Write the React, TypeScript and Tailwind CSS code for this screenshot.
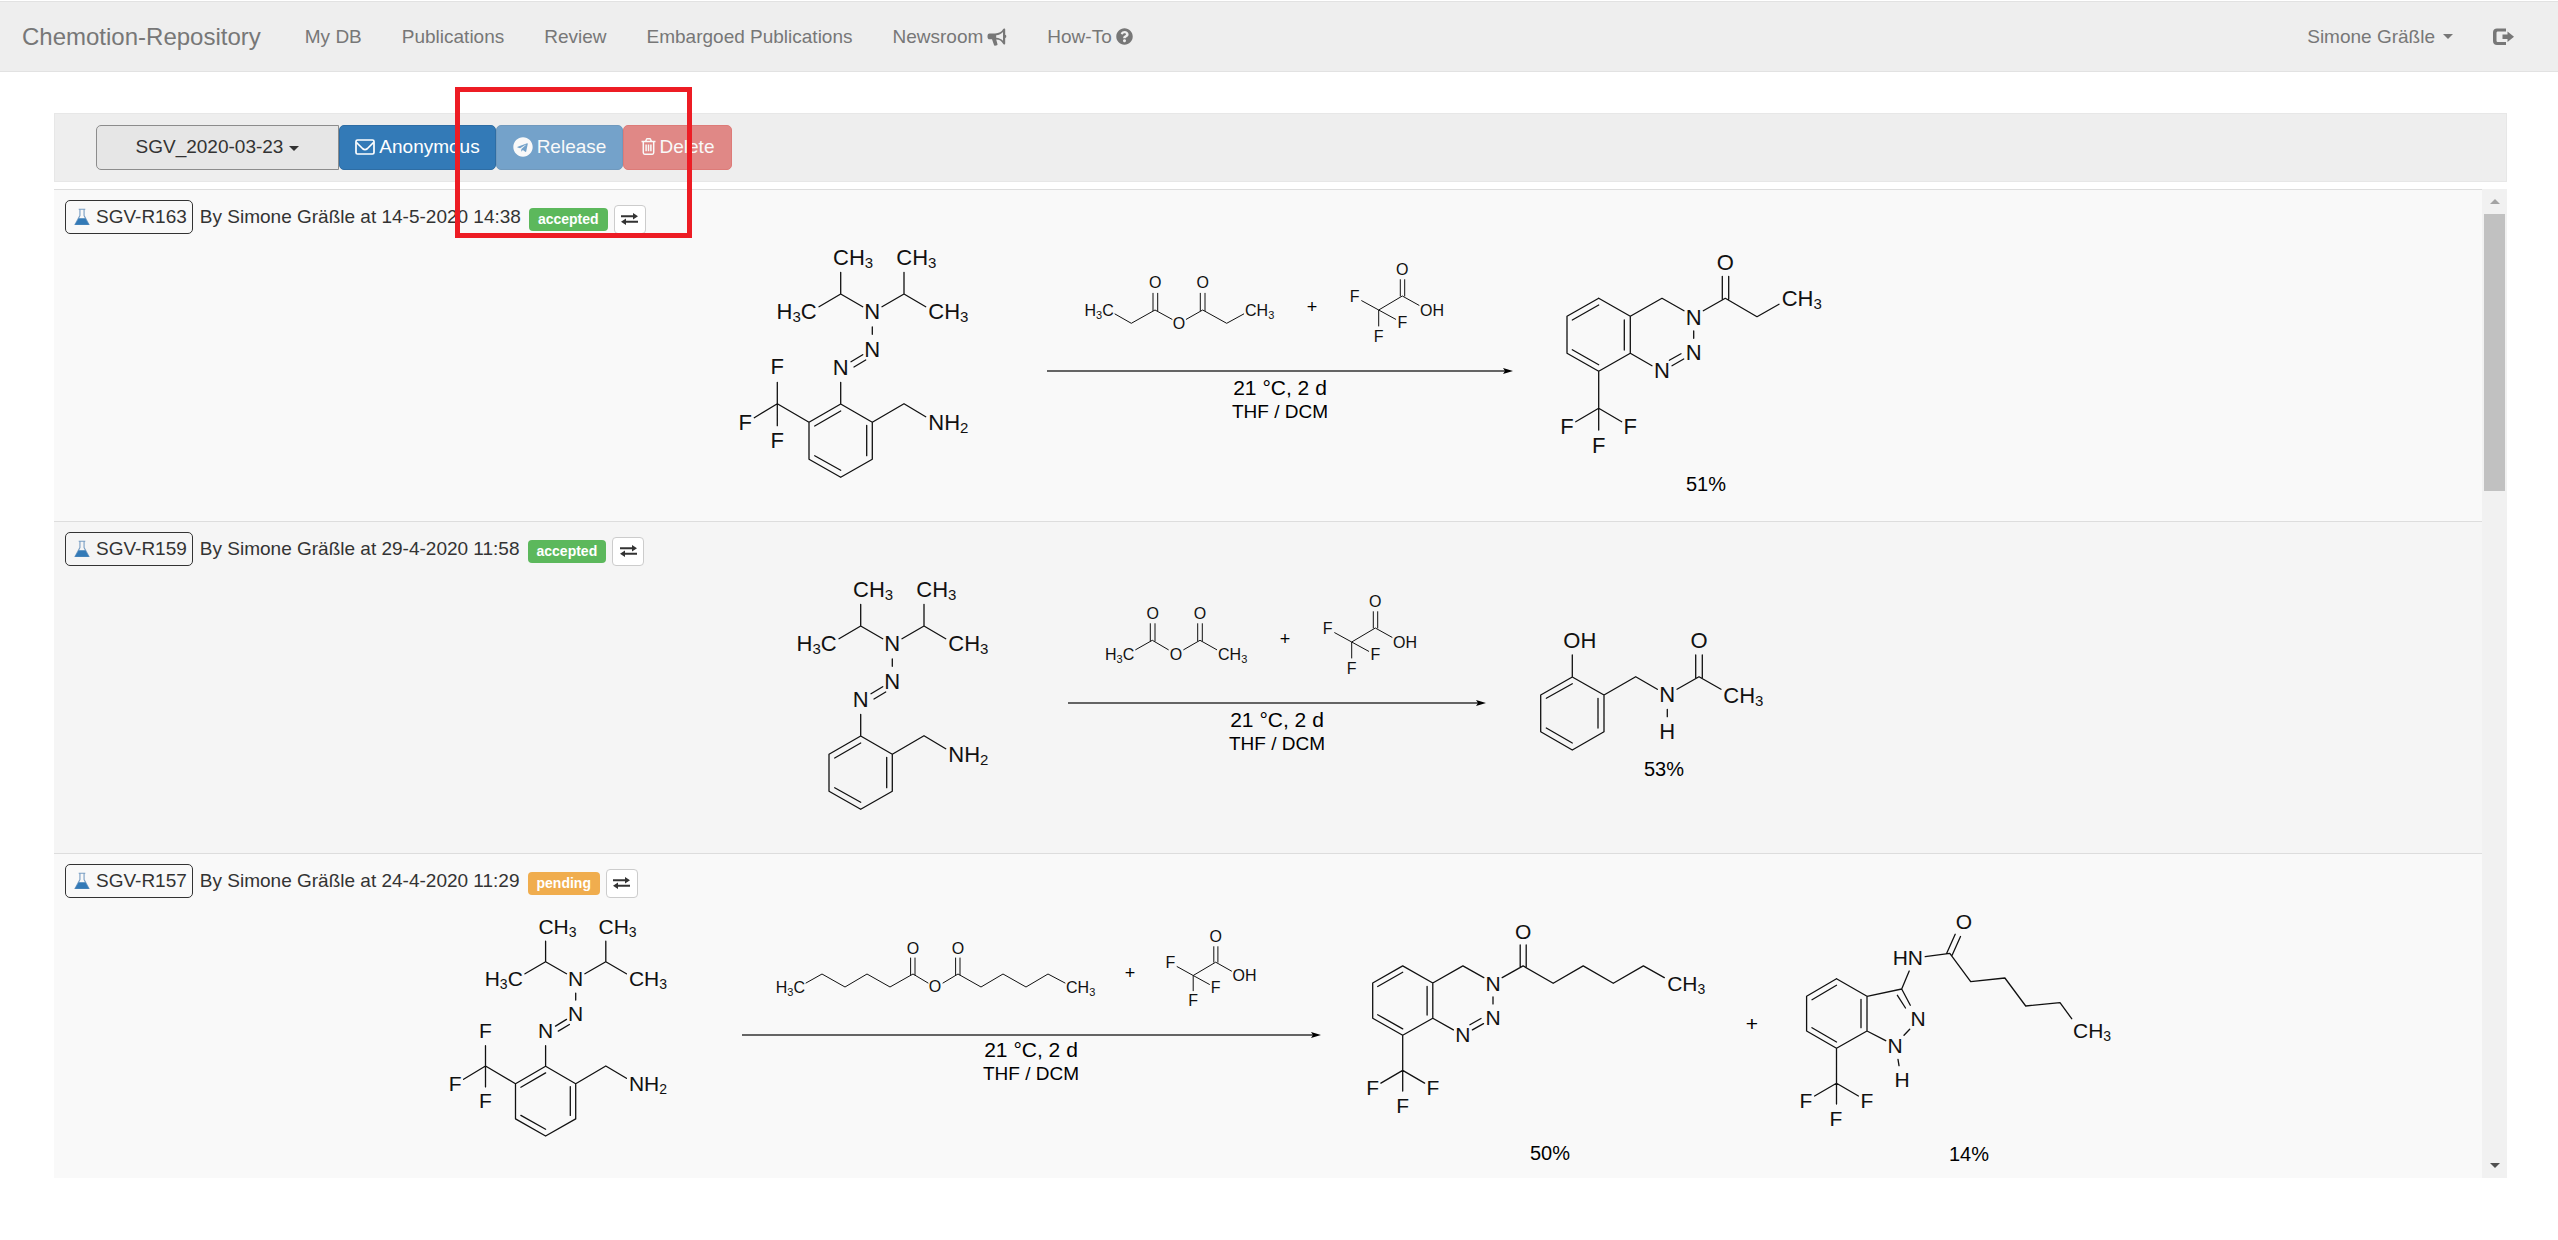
import React from "react";
import { FaQuestionCircle, FaTelegram } from "react-icons/fa";

type Pt = [number, number];
type Anchor = "start" | "middle" | "end";
type Label = [string, number, number, Anchor];

/* ---------- icons ---------- */

function Caret({ className = "" }: { className?: string }) {
  return (
    <svg viewBox="0 0 10 5" className={`inline-block h-[5px] w-[10px] ${className}`} fill="currentColor" aria-hidden="true">
      <path d="M0 0h10L5 5z" />
    </svg>
  );
}

function BullhornIcon() {
  return (
    <svg viewBox="0 0 20 18" className="h-[18px] w-5" fill="currentColor" aria-hidden="true">
      <path d="M17.2 0.4c.9 0 1 .6 1 1.2v5.2c1.500 .2 1.500 3 0 3.200v5.200c0 .8-.2 1.300-1 1.300-.6 0-.9-.3-1.100-.8C14.700 12.700 12.300 11.600 9.200 11.400l1.300 4.900c.1.5 0 .8-.5.9l-2 .5c-.5.1-.8-.1-1-.6L5 11.300H2.500C1.200 11.300.500 10.200.500 8.400s.7-2.900 2-2.900h5.600c3.800-.1 6.600-1.300 8.100-4.400.2-.4.5-.7 1-.7zM16 3.900c-1.700 2-4 3-6.800 3.300v2.500c2.800.2 5.100 1.200 6.800 3.100z" />
    </svg>
  );
}

function LogOutIcon() {
  return (
    <svg viewBox="0 0 21 18" className="h-[18px] w-[21px]" fill="currentColor" aria-hidden="true">
      <path d="M13 0.500V3.500H5C4 3.500 3.500 4 3.500 5v7.500c0 1 .5 1.500 1.500 1.500h8v3H4C1.500 17 0 15.500 0 13V4.500C0 2 1.500.500 4 .500z" />
      <path d="M14.500 3.500L21 8.700l-6.500 5.300v-3.100H9.500V6.500h5z" />
    </svg>
  );
}

function EnvelopeIcon() {
  return (
    <svg viewBox="0 0 20 16" className="h-4 w-5" fill="none" stroke="currentColor" strokeWidth="1.700" aria-hidden="true">
      <rect x="1" y="1" width="18" height="14" rx="1.500" />
      <path d="M1.500 3.500c2 2 4 4 6 6 1.700 1.500 3.300 1.500 5 0 2-2 4-4 6-6" />
    </svg>
  );
}

function TrashIcon() {
  return (
    <svg viewBox="0 0 15 17" className="h-[17px] w-[15px]" fill="none" stroke="currentColor" strokeWidth="1.500" aria-hidden="true">
      <path d="M.5 3.600h14M4.600 3.400l.9-2.200c.1-.3.3-.4.600-.4h2.800c.3 0 .5.1.6.4l.9 2.200M2.300 3.800v10.700c0 1 .6 1.700 1.400 1.700h7.600c.8 0 1.400-.7 1.400-1.700V3.800M5.100 6.400v6.800M7.500 6.400v6.800M9.900 6.400v6.800" />
    </svg>
  );
}

function FlaskIcon() {
  return (
    <svg viewBox="0 0 17 18" className="h-[18px] w-4" aria-hidden="true">
      <path d="M5 .8h7M6.300 1v6.500L1.200 17h14.600L10.700 7.500V1" fill="none" stroke="#7a9fc4" strokeWidth="1.200" />
      <path d="M5 10.300h7l4 7H1z" fill="#337ab7" />
    </svg>
  );
}

function ExchangeIcon() {
  return (
    <svg viewBox="0 0 17 12" className="h-3 w-[17px]" fill="currentColor" aria-hidden="true">
      <path d="M0 2.300h12V0l5 3.300-5 3.200V4.300H0zM17 7.700H5V5.500L0 8.700 5 12V9.700h12z" />
    </svg>
  );
}

/* ---------- structure drawing ---------- */

function AtomText({ label, x, y, anchor, size }: { label: string; x: number; y: number; anchor: Anchor; size: number }) {
  const sub = Math.round(size * 0.68);
  let lowered = false;
  return (
    <text x={x} y={y} textAnchor={anchor} fontSize={size} fill="#111">
      {label.split("").map((ch, i) => {
        const isSub = ch >= "2" && ch <= "3";
        const dy = isSub && !lowered ? 3 : !isSub && lowered ? -3 : 0;
        lowered = isSub;
        return (
          <tspan key={i} dy={dy} fontSize={isSub ? sub : size}>
            {ch}
          </tspan>
        );
      })}
    </text>
  );
}

/* Draws bonds and atom labels given in drawing units, placed at (x, y) and scaled by k. */
function Structure({ x, y, k, size, thin, bonds, labels }: { x: number; y: number; k: number; size: number; thin?: boolean; bonds: Pt[][]; labels: Label[] }) {
  const px = (v: number) => (x + v * k).toFixed(1);
  const py = (v: number) => (y + v * k).toFixed(1);
  const d = bonds.map((line) => "M" + line.map(([a, b]) => `${px(a)} ${py(b)}`).join("L")).join("");
  return (
    <g>
      <path d={d} fill="none" stroke="#111" strokeWidth={thin ? 1 : 1.3} strokeLinecap="round" strokeLinejoin="round" />
      {labels.map(([label, a, b, anchor], i) => (
        <AtomText key={i} label={label} x={Number(px(a))} y={Number(py(b))} anchor={anchor} size={size} />
      ))}
    </g>
  );
}

const THIRD = 1 / 3;
const SMALL = 0.95 / 3;

const triazeneBonds: Pt[][] = [
  [[362, 127], [362, 192], [297, 230]],
  [[362, 192], [428, 230]],
  [[552, 127], [552, 192], [617, 230]],
  [[552, 192], [486, 230]],
  [[457, 291], [457, 313]],
  [[393, 395], [428, 374]],
  [[402, 411], [437, 390]],
  [[362, 457], [362, 522], [457, 577], [457, 688], [362, 742], [267, 688], [267, 577], [362, 522]],
  [[284, 588], [362, 543]],
  [[284, 677], [362, 721]],
  [[440, 586], [440, 677]],
  [[457, 577], [552, 521], [617, 560]],
];
const triazeneLabels: Label[] = [
  ["CH3", 339, 104, "start"],
  ["CH3", 529, 104, "start"],
  ["H3C", 290, 268, "end"],
  ["CH3", 625, 268, "start"],
  ["N", 457, 268, "middle"],
  ["N", 457, 380, "middle"],
  ["N", 362, 434, "middle"],
  ["NH2", 625, 599, "start"],
];
const triazeneCf3Bonds: Pt[][] = [
  [[267, 577], [172, 521], [103, 563]],
  [[172, 457], [172, 587]],
];
const triazeneCf3Labels: Label[] = [
  ["F", 172, 432, "middle"],
  ["F", 76, 599, "middle"],
  ["F", 172, 655, "middle"],
];

function Triazene({ x, y, k, size, cf3 }: { x: number; y: number; k: number; size: number; cf3?: boolean }) {
  return (
    <Structure
      x={x}
      y={y}
      k={k}
      size={size}
      bonds={cf3 ? [...triazeneBonds, ...triazeneCf3Bonds] : triazeneBonds}
      labels={cf3 ? [...triazeneLabels, ...triazeneCf3Labels] : triazeneLabels}
    />
  );
}

const tfaBonds: Pt[][] = [
  [[995, 182], [1046, 210], [1117, 168], [1167, 196]],
  [[1046, 258], [1046, 210], [1097, 238]],
  [[1111, 119], [1111, 168]],
  [[1124, 119], [1124, 168]],
];
const tfaLabels: Label[] = [
  ["F", 974, 185, "middle"],
  ["F", 1117, 265, "middle"],
  ["F", 1046, 307, "middle"],
  ["O", 1117, 104, "middle"],
  ["OH", 1170, 227, "start"],
];

function Benzotriazine({ x, y, k, size, tail, tailEnd }: { x: number; y: number; k: number; size: number; tail: Pt[]; tailEnd: Pt }) {
  return (
    <Structure
      x={x}
      y={y}
      k={k}
      size={size}
      bonds={[
        [[296, 205], [391, 259], [391, 370], [296, 424], [201, 370], [201, 259], [296, 205]],
        [[217, 270], [296, 225]],
        [[373, 270], [373, 360]],
        [[217, 359], [296, 404]],
        [[391, 259], [486, 205], [552, 242]],
        [[391, 370], [456, 407]],
        [[508, 391], [543, 371]],
        [[516, 407], [551, 387]],
        [[581, 303], [581, 325]],
        [[610, 242], [676, 205], ...tail],
        [[667, 139], [667, 208]],
        [[686, 139], [686, 208]],
        [[296, 424], [296, 600]],
        [[227, 575], [296, 535], [365, 575]],
      ]}
      labels={[
        ["N", 486, 445, "middle"],
        ["N", 581, 391, "middle"],
        ["N", 581, 284, "middle"],
        ["O", 676, 119, "middle"],
        ["F", 201, 611, "middle"],
        ["F", 391, 611, "middle"],
        ["F", 296, 668, "middle"],
        ["CH3", tailEnd[0], tailEnd[1], "start"],
      ]}
    />
  );
}

function Caption({ x, y, size, children }: { x: number; y: number; size: number; children: string }) {
  return (
    <text x={x} y={y} fontSize={size} textAnchor="middle" fill="#000">
      {children}
    </text>
  );
}

function Conditions({ from, to, middle, top = 395 }: { from: number; to: number; middle: number; top?: number }) {
  return (
    <g>
      <path d={`M${from} 371H${to - 8}`} stroke="#333" strokeWidth="1.400" />
      <path d={`M${to - 10} 368L${to} 371L${to - 10} 374L${to - 8} 371z`} fill="#000" />
      <Caption x={middle} y={top} size={21}>21 °C, 2 d</Caption>
      <Caption x={middle} y={top + 23} size={19}>THF / DCM</Caption>
    </g>
  );
}

function Scheme({ title, children }: { title: string; children: React.ReactNode }) {
  return (
    <svg viewBox="268 240 2000 270" className="mx-auto mt-1.5 block h-auto w-[2000px] max-w-full" fontFamily="'Liberation Sans', Arial, sans-serif" role="img" aria-label={title}>
      {children}
    </svg>
  );
}

function SchemeR163() {
  return (
    <Scheme title="Reaction SGV-R163">
      <Triazene x={720} y={230} k={THIRD} size={22} cf3 />
      <Structure
        x={1030}
        y={240}
        k={THIRD}
        size={16}
        thin
        bonds={[
          [[255, 222], [304, 250], [375, 210], [426, 238]],
          [[469, 238], [518, 210], [590, 250], [641, 222]],
          [[369, 160], [369, 212]],
          [[383, 160], [383, 212]],
          [[511, 160], [511, 212]],
          [[525, 160], [525, 212]],
          ...tfaBonds,
        ]}
        labels={[
          ["H3C", 251, 228, "end"],
          ["O", 376, 144, "middle"],
          ["O", 447, 266, "middle"],
          ["O", 518, 144, "middle"],
          ["CH3", 645, 228, "start"],
          ...tfaLabels,
        ]}
      />
      <Caption x={1312} y={313} size={18}>+</Caption>
      <Conditions from={1047} to={1513} middle={1280} />
      <Benzotriazine x={1500} y={230} k={THIRD} size={22} tail={[[771, 260], [837, 223]]} tailEnd={[845, 229]} />
      <Caption x={1706} y={491} size={20}>51%</Caption>
    </Scheme>
  );
}

function SchemeR159() {
  return (
    <Scheme title="Reaction SGV-R159">
      <Triazene x={740} y={230} k={THIRD} size={22} />
      <Structure
        x={1003}
        y={240}
        k={THIRD}
        size={16}
        thin
        bonds={[
          [[398, 233], [448, 205], [496, 233]],
          [[542, 233], [591, 205], [641, 233]],
          [[442, 155], [442, 207]],
          [[456, 155], [456, 207]],
          [[584, 155], [584, 207]],
          [[598, 155], [598, 207]],
          ...tfaBonds,
        ]}
        labels={[
          ["H3C", 394, 263, "end"],
          ["O", 449, 141, "middle"],
          ["O", 519, 263, "middle"],
          ["O", 591, 141, "middle"],
          ["CH3", 645, 263, "start"],
          ...tfaLabels,
        ]}
      />
      <Caption x={1285} y={313} size={18}>+</Caption>
      <Conditions from={1068} to={1486} middle={1277} />
      <Structure
        x={1500}
        y={268}
        k={THIRD}
        size={22}
        bonds={[
          [[217, 165], [217, 231], [312, 285], [312, 395], [217, 450], [122, 395], [122, 285], [217, 231]],
          [[139, 295], [217, 251]],
          [[294, 295], [294, 384]],
          [[139, 384], [217, 429]],
          [[312, 285], [407, 230], [472, 268]],
          [[502, 328], [502, 350]],
          [[531, 268], [597, 230], [663, 268]],
          [[587, 165], [587, 234]],
          [[607, 165], [607, 234]],
        ]}
        labels={[
          ["OH", 190, 143, "start"],
          ["N", 502, 306, "middle"],
          ["H", 502, 416, "middle"],
          ["O", 597, 143, "middle"],
          ["CH3", 670, 308, "start"],
        ]}
      />
      <Caption x={1664} y={444} size={20}>53%</Caption>
    </Scheme>
  );
}

function SchemeR157() {
  return (
    <Scheme title="Reaction SGV-R157">
      <Triazene x={431} y={237} k={SMALL} size={21} cf3 />
      <Structure
        x={0}
        y={0}
        k={1}
        size={16}
        thin
        bonds={[
          [[806, 319], [822, 310], [845, 323], [867, 310], [890, 323], [913, 310], [928, 319]],
          [[943, 319], [958, 310], [981, 323], [1003, 310], [1026, 323], [1048, 310], [1065, 319]],
          [[910.6, 294], [910.6, 311]],
          [[915, 294], [915, 311]],
          [[955.600, 294], [955.600, 311]],
          [[960, 294], [960, 311]],
        ]}
        labels={[
          ["H3C", 805, 329, "end"],
          ["O", 913, 290, "middle"],
          ["O", 935, 328, "middle"],
          ["O", 958, 290, "middle"],
          ["CH3", 1066, 329, "start"],
        ]}
      />
      <Structure x={862} y={245} k={SMALL} size={16} thin bonds={tfaBonds} labels={tfaLabels} />
      <Caption x={1130} y={315} size={18}>+</Caption>
      <Conditions from={742} to={1321} middle={1031} top={393} />
      <Benzotriazine x={1309} y={237} k={SMALL} size={21} tail={[[771, 260], [866, 205], [961, 260], [1056, 205], [1122, 242]]} tailEnd={[1131, 285]} />
      <Caption x={1550} y={496} size={20}>50%</Caption>
      <Caption x={1752} y={367} size={21}>+</Caption>
      <Structure
        x={0}
        y={0}
        k={1}
        size={21}
        bonds={[
          [[1836.5, 314.7], [1867, 332.3], [1867, 367], [1836.5, 384.3], [1806.6, 367], [1806.6, 332.3], [1836.5, 314.7]],
          [[1812, 335.7], [1836.5, 321.3]],
          [[1861, 335.3], [1861, 363.7]],
          [[1812, 363.7], [1836.5, 378]],
          [[1867, 332.3], [1901.7, 325], [1910.3, 341.3]],
          [[1897.4, 331.3], [1905.5, 344]],
          [[1909.7, 365.3], [1904, 371.3]],
          [[1867, 367], [1885.7, 376.7]],
          [[1898, 395.3], [1899, 401.7]],
          [[1901.7, 325], [1909.2, 307]],
          [[1925.2, 292.6], [1949.8, 289.3], [1970.7, 317.7], [2004.9, 314], [2025.7, 342], [2060, 338.7], [2071.7, 354.7]],
          [[1946.6, 289.6], [1955.2, 270.3]],
          [[1952, 291.5], [1960.5, 272.5]],
          [[1836.5, 384.3], [1836.5, 440]],
          [[1814.6, 432], [1836.5, 419.3], [1858.4, 432]],
        ]}
        labels={[
          ["O", 1964, 265, "middle"],
          ["HN", 1923, 301, "end"],
          ["N", 1918, 362, "middle"],
          ["N", 1895, 389, "middle"],
          ["H", 1902, 423, "middle"],
          ["CH3", 2073, 374, "start"],
          ["F", 1806, 444, "middle"],
          ["F", 1867, 444, "middle"],
          ["F", 1836, 462, "middle"],
        ]}
      />
      <Caption x={1969} y={497} size={20}>14%</Caption>
    </Scheme>
  );
}

/* ---------- page ---------- */

const navItems: { label: string; icon?: React.ReactNode }[] = [
  { label: "My DB" },
  { label: "Publications" },
  { label: "Review" },
  { label: "Embargoed Publications" },
  { label: "Newsroom", icon: <BullhornIcon /> },
  { label: "How-To", icon: <FaQuestionCircle className="h-[17px] w-[17px]" /> },
];

const reactions = [
  { id: "SGV-R163", date: "14-5-2020 14:38", status: "accepted", scheme: <SchemeR163 /> },
  { id: "SGV-R159", date: "29-4-2020 11:58", status: "accepted", scheme: <SchemeR159 /> },
  { id: "SGV-R157", date: "24-4-2020 11:29", status: "pending", scheme: <SchemeR157 /> },
];

function NavBar() {
  return (
    <nav className="mt-px flex h-[71px] shrink-0 items-center border-y border-[#e2e2e2] bg-[#eee] px-[22px] text-[#777]">
      <a href="#home" className="mr-6 text-[24px]">Chemotion-Repository</a>
      <div className="flex items-center">
        {navItems.map((item) => (
          <a key={item.label} href="#nav" className="flex items-center gap-1 px-5">
            {item.label}
            {item.icon}
          </a>
        ))}
      </div>
      <div className="ml-auto flex items-center gap-10 pr-[22px]">
        <button type="button" className="flex items-center gap-2">
          Simone Gräßle
          <Caret />
        </button>
        <button type="button" aria-label="Log out">
          <LogOutIcon />
        </button>
      </div>
    </nav>
  );
}

function Toolbar() {
  return (
    <div className="relative flex h-[69px] shrink-0 items-center border border-[#e7e7e7] bg-[#eee] pl-[41px]">
      <button type="button" className="flex h-[45px] w-[243px] items-center justify-center gap-1.5 rounded-l-[5px] border border-[#8c8c8c] bg-[#e6e6e6] pb-0.5 text-[#333]">
        SGV_2020-03-23
        <Caret className="mt-1" />
      </button>
      <button type="button" className="flex h-[45px] w-[157px] items-center justify-center gap-1 rounded-[5px] border border-[#2e6da4] bg-[#337ab7] pb-0.5 text-white">
        <EnvelopeIcon />
        Anonymous
      </button>
      <button type="button" disabled className="flex h-[45px] w-[127px] items-center justify-center gap-1 rounded-[5px] border border-[#2e6da4] bg-[#337ab7] pb-0.5 text-white opacity-65">
        <FaTelegram className="h-5 w-5" />
        Release
      </button>
      <button type="button" disabled className="flex h-[45px] w-[109px] items-center justify-center gap-1 rounded-[5px] border border-[#d43f3a] bg-[#d9534f] pb-0.5 text-white opacity-65">
        <TrashIcon />
        Delete
      </button>
      <div className="pointer-events-none absolute top-[-27px] left-[400px] z-10 h-[151px] w-[237px] border-[5px] border-[#ed1c24]" />
    </div>
  );
}

function ScrollBar() {
  return (
    <div className="flex w-[25px] shrink-0 flex-col items-center bg-[#f1f1f1]">
      <button type="button" aria-label="Scroll up" className="flex h-[25px] w-full shrink-0 items-center justify-center text-[#a3a3a3]">
        <Caret className="rotate-180" />
      </button>
      <div className="flex w-full flex-1 flex-col items-center">
        <div className="h-[277px] w-[21px] bg-[#c1c1c1]" />
      </div>
      <button type="button" aria-label="Scroll down" className="flex h-[25px] w-full shrink-0 items-center justify-center text-[#505050]">
        <Caret />
      </button>
    </div>
  );
}

export default function App() {
  return (
    <div className="flex h-screen flex-col overflow-hidden bg-white font-['Liberation_Sans',Arial,sans-serif] text-[19px] leading-6 text-[#333]">
      <NavBar />
      <main className="flex min-h-0 flex-1 flex-col pt-[41px] pr-[51px] pb-[62px] pl-[54px]">
        <Toolbar />
        <div className="mt-[7px] flex min-h-0 flex-1">
          <ul className="min-w-0 flex-1 overflow-hidden">
            {reactions.map((r) => (
              <li key={r.id} className="h-[332px] border-t border-[#ddd] bg-[#f9f9f9] px-[11px] pt-2.5 even:bg-[#f5f5f5]">
                <div className="flex items-center">
                  <button type="button" className="flex h-[34px] items-center gap-1.5 rounded-[5px] border border-[#333] pr-[5px] pl-2 whitespace-nowrap">
                    <FlaskIcon />
                    {r.id}
                  </button>
                  <span className="ml-[7px] whitespace-nowrap">
                    By Simone Gräßle at {r.date}
                  </span>
                  <span
                    className={
                      r.status === "accepted"
                        ? "mt-1 ml-2 flex h-[23px] items-center rounded-[4px] bg-[#5cb85c] px-[9px] text-[14px] font-bold text-white"
                        : "mt-1 ml-2 flex h-[23px] items-center rounded-[4px] bg-[#f0ad4e] px-[9px] text-[14px] font-bold text-white"
                    }
                  >
                    {r.status}
                  </span>
                  <button type="button" aria-label={`Switch view of ${r.id}`} className="mt-1 ml-1.5 flex h-[29px] w-8 items-center justify-center rounded-[4px] border border-[#ccc] bg-white">
                    <ExchangeIcon />
                  </button>
                </div>
                {r.scheme}
              </li>
            ))}
          </ul>
          <ScrollBar />
        </div>
      </main>
    </div>
  );
}
